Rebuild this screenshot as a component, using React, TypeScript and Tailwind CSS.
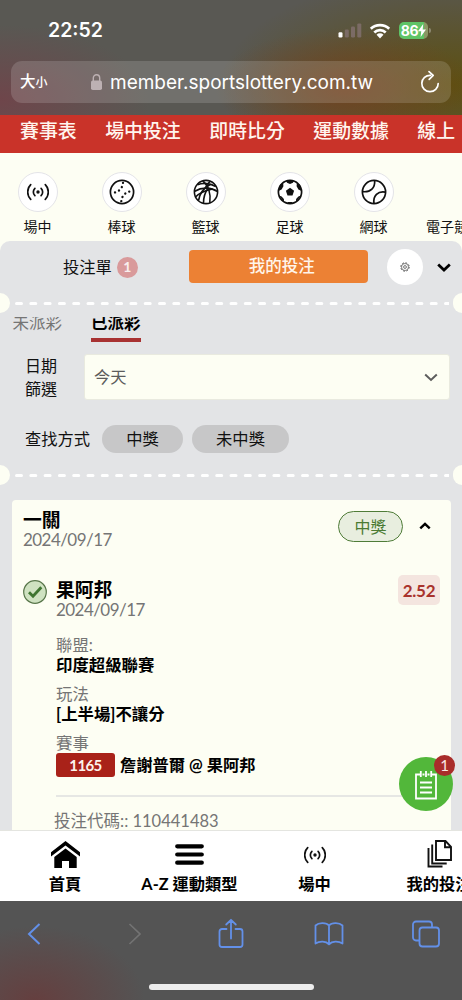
import type { ReactNode } from 'react'
import clsx from 'clsx'

const NAV_LINKS = ['賽事表', '場中投注', '即時比分', '運動數據', '線上']

const SPORTS: { label: string; icon: ReactNode }[] = [
  { label: '場中', icon: <LiveIcon className="w-[22px] h-[22px]" /> },
  { label: '棒球', icon: <BaseballIcon /> },
  { label: '籃球', icon: <BasketballIcon /> },
  { label: '足球', icon: <FootballIcon /> },
  { label: '網球', icon: <TennisIcon /> },
]

const BET_INFO = [
  { label: '聯盟:', value: '印度超級聯賽' },
  { label: '玩法', value: '[上半場]不讓分' },
]

function LiveIcon({ className }: { className?: string }) {
  return (
    <svg viewBox="0 0 22 22" className={className} fill="none" stroke="#111" strokeWidth="1.7" strokeLinecap="round">
      <circle cx="11" cy="11" r="1.7" fill="#111" stroke="none" />
      <path d="M7.9 7.3a5.2 5.2 0 0 0 0 7.4M14.1 7.3a5.2 5.2 0 0 1 0 7.4" />
      <path d="M3.7 3.6a10.6 10.6 0 0 0 0 14.8M18.3 3.6a10.6 10.6 0 0 1 0 14.8" />
    </svg>
  )
}

function BaseballIcon() {
  return (
    <svg viewBox="0 0 26 26" className="w-[26px] h-[26px]" fill="none" stroke="#111" strokeWidth="1.7">
      <circle cx="13" cy="13" r="11.6" />
      <path d="M14 3.5a10.5 10.5 0 0 1-9.5 10.2M12.3 22.5A10.5 10.5 0 0 1 21.8 12.3" strokeWidth="2.3" strokeLinecap="round" strokeDasharray="0.1 4.3" strokeDashoffset="-0.3" />
    </svg>
  )
}

function BasketballIcon() {
  return (
    <svg viewBox="0 0 26 26" className="w-[26px] h-[26px]" fill="none" stroke="#111" strokeWidth="1.6">
      <circle cx="13" cy="13" r="11.6" />
      <path d="M4.5 5.8C10 3.6 17.5 4.4 22.8 7.5M1.8 12.2C9 7.8 18 8.2 24.6 12.6M2.5 18C7 13.5 13 11.2 19.8 10" />
      <path d="M9.8 2C15.5 6.5 18 15 16.8 23.8M17.5 2.2C14.5 4.5 13.2 6 12.6 8.5M5.5 21.5c1-6 5-12.5 12-16.3M10.5 24c0-5 1.5-10.5 4.3-14.5" />
    </svg>
  )
}

function FootballIcon() {
  return (
    <svg viewBox="0 0 26 26" className="w-[26px] h-[26px]" fill="#111">
      <circle cx="13" cy="13" r="11.6" fill="none" stroke="#111" strokeWidth="1.7" />
      <path d="M13 8.8l4.1 3-1.6 4.8h-5l-1.6-4.8z" />
      <path d="M9 1.5h8l-1 2.2-3 1.2-3-1.2zM3 5.6L6.2 4.6 6.4 7.3 4.6 10.4 1.4 12zM23 5.6L19.8 4.6 19.6 7.3l1.8 3.1 3.2 1.6zM1.8 16.5l2.8.9 2.3 2.6.1 3zM24.2 16.5l-2.8.9-2.3 2.6-.1 3zM10 24.5l.9-1.6h4.2l.9 1.6z" />
    </svg>
  )
}

function TennisIcon() {
  return (
    <svg viewBox="0 0 26 26" className="w-[26px] h-[26px]" fill="none" stroke="#111" strokeWidth="1.7">
      <circle cx="13" cy="13" r="11.6" />
      <path d="M13.6 1.4C14.4 8.6 9.6 13.6 1.6 12.6M24.4 13.2C17 11.8 11.8 16.8 13 24.5" />
    </svg>
  )
}

function Chevron({ up, className }: { up?: boolean; className?: string }) {
  return (
    <svg viewBox="0 0 14 9" className={className} fill="none" stroke="currentColor">
      <path d={up ? 'M1.5 7.3L7 2l5.5 5.3' : 'M1.2 1.6L7 7l5.8-5.4'} />
    </svg>
  )
}

// ticket-style perforation with a notch on both sides
function Perforation() {
  return (
    <div className="flex h-[20px] items-center justify-between overflow-hidden">
      <span className="h-[20px] w-[10px] shrink-0 rounded-r-full bg-[#fdfef3]" />
      <svg className="h-[3px] w-[434px] shrink-0" viewBox="0 0 434 3">
        <line x1="1.5" y1="1.5" x2="434" y2="1.5" stroke="#fff" strokeWidth="3" strokeLinecap="round" strokeDasharray="5 9.3" />
      </svg>
      <span className="h-[20px] w-[9px] shrink-0 rounded-l-full bg-[#fdfef3]" />
    </div>
  )
}

function BrowserHeader() {
  return (
    <header className="h-[115px] bg-[radial-gradient(ellipse_130px_60px_at_345px_88px,#74401fdd,transparent),radial-gradient(ellipse_230px_110px_at_450px_85px,#5d5010,transparent),radial-gradient(ellipse_150px_75px_at_0px_100px,#70444aee,transparent)] bg-[#595853] font-['Inter','Noto_Sans_CJK_TC',sans-serif] text-white">
      <div className="flex h-[61px] items-center justify-between pl-[48px] pr-[31px]">
        <span className="text-[19.5px] font-semibold leading-none">22:52</span>
        <div className="flex items-center">
          <svg className="h-[15px] w-[24px]" viewBox="0 0 24 15">
            <rect x="0.5" y="9.3" width="4" height="5.2" rx="1.2" fill="#fff" />
            <rect x="6.8" y="6.6" width="4" height="7.9" rx="1.2" fill="#7b6b65" />
            <rect x="13" y="3.5" width="4" height="11" rx="1.2" fill="#7b6b65" />
            <rect x="19.3" y="0.4" width="4" height="14.1" rx="1.2" fill="#7b6b65" />
          </svg>
          <svg className="ml-[7px] h-[16px] w-[22px]" viewBox="0 0 22 16" fill="none" stroke="#fff" strokeWidth="2.7">
            <path d="M1.8 5.8a13.3 13.3 0 0 1 18.4 0M5.3 9.5a8.2 8.2 0 0 1 11.4 0" />
            <path d="M11 15.4L7.5 11.8a5 5 0 0 1 7 0z" fill="#fff" stroke="none" />
          </svg>
          <div className="ml-2 flex h-[17px] w-[29px] items-center justify-center rounded-[5px] bg-[linear-gradient(90deg,#5fc466_86%,#8b9765_86%)] text-[14px] font-bold leading-none tracking-[-0.3px]">
            86
            <svg className="h-[13px] w-[8px]" viewBox="0 0 8 13"><path d="M5.2 0L0 7.2h3.2L2.6 13 8 5.6H4.7z" fill="#fff" /></svg>
          </div>
          <span className="ml-px h-[5px] w-[2px] rounded-r-full bg-white/30" />
        </div>
      </div>
      <div className="mx-[11px] flex h-[42px] items-center rounded-[11px] bg-white/15 pl-[9px] pr-[11px]">
        <span className="w-[71px] whitespace-nowrap text-[15.5px] font-medium leading-none">大<span className="text-[12px]">小</span></span>
        <svg className="h-[16px] w-[11px]" viewBox="0 0 11 16">
          <rect y="6.5" width="11" height="9.5" rx="1.8" fill="#bdb1b3" />
          <path d="M2.3 7V4a3.2 3.2 0 0 1 6.4 0v3" fill="none" stroke="#bdb1b3" strokeWidth="1.4" />
        </svg>
        <span className="ml-[8px] flex-1 text-[19px] leading-none">member.sportslottery.com.tw</span>
        <svg className="h-[24px] w-[20px]" viewBox="0 0 20 24" fill="none" stroke="#fff" strokeWidth="1.7" strokeLinecap="round" strokeLinejoin="round">
          <path d="M10.5 5.3a8.2 8.2 0 1 0 7.7 8.2M9 1.6l4.2 3.8L9.2 9.3" />
        </svg>
      </div>
    </header>
  )
}

function BetCard() {
  return (
    <section className="ml-[12px] mr-[11px] mt-[15px] h-[330px] overflow-hidden rounded-t-[4px] bg-[#fdfef3] px-[11px] pt-[9px]">
      <div className="flex h-[41px] justify-between">
        <div>
          <h2 className="h-[21px] text-[18.8px] font-bold leading-[21px] text-black">一關</h2>
          <p className="text-[17px] leading-[19px] tracking-[-0.55px] text-[#757575]">2024/09/17</p>
        </div>
        <div className="flex items-start pt-[2px]">
          <span className="flex h-[31px] w-[65px] items-center justify-center rounded-full border border-[#4f7c38] bg-[#e8eedf] text-[16px] leading-none text-[#4a7a32]">中獎</span>
          <Chevron up className="ml-[16px] mr-[9px] mt-[11px] h-[8px] w-[12px] text-black stroke-[2.8]" />
        </div>
      </div>

      <div className="mt-[29px] flex">
        <svg className="mt-[1px] h-[24px] w-[24px] shrink-0" viewBox="0 0 24 24">
          <circle cx="12" cy="12" r="11.3" fill="#cfe2c1" stroke="#58764a" strokeWidth="1.2" />
          <path d="M6 12.3l4 4 8.3-9" fill="none" stroke="#3f7530" strokeWidth="2.8" />
        </svg>
        <div className="ml-[9px] flex-1">
          <div className="flex h-[41px] justify-between">
            <div>
              <h3 className="h-[21px] text-[18.8px] font-bold leading-[21px] text-black">果阿邦</h3>
              <p className="text-[17px] leading-[19px] tracking-[-0.55px] text-[#757575]">2024/09/17</p>
            </div>
            <span className="-mt-[4px] flex h-[30px] w-[42px] items-center justify-center rounded-[5px] bg-[#f4e5df] text-[17px] font-bold leading-none tracking-[-0.3px] text-[#a9332c]">2.52</span>
          </div>
          <div className="mt-[15px] text-[16.4px] leading-[20px]">
            {BET_INFO.map((info) => (
              <div key={info.label} className="mb-[9px]">
                <p className="h-[20px] text-[#757575]">{info.label}</p>
                <p className="h-[20px] font-bold text-black">{info.value}</p>
              </div>
            ))}
            <p className="h-[20px] text-[#757575]">賽事</p>
            <div className="flex h-[24px] items-center">
              <span className="flex h-[24px] w-[59px] items-center justify-center rounded-[3px] bg-[#a92219] text-[15px] font-bold leading-none tracking-[-0.6px] text-[#fdf4ec]">1165</span>
              <span className="ml-[5px] whitespace-nowrap text-[16.3px] font-bold text-black">詹謝普爾 @ 果阿邦</span>
            </div>
          </div>
          <div className="mt-[18px] border-t-2 border-[#e6e7e4] pt-[14px]">
            <p className="-ml-[2px] text-[16.5px] leading-[20px] text-[#757575]">投注代碼:: 110441483</p>
          </div>
        </div>
      </div>
    </section>
  )
}

function BottomNav() {
  return (
    <nav className="flex h-[71px] overflow-hidden border-t border-[#e4e5e0] bg-white text-[16.3px] font-bold leading-[20px] text-black">
      <div className="flex w-[130px] shrink-0 flex-col items-center">
        <svg className="mt-[10px] h-[27px] w-[29px]" viewBox="0 0 29 27">
          <path d="M0 11.2L14.5 0 29 11.2v4.3L14.5 4.4 0 15.5z" />
          <path d="M3.3 16L14.5 7.4 25.7 16v11H18v-7h-7v7H3.3z" />
        </svg>
        <span className="mt-[6px]">首頁</span>
      </div>
      <div className="flex w-[119px] shrink-0 flex-col items-center whitespace-nowrap">
        <svg className="mt-[10px] h-[27px] w-[29px]" viewBox="0 0 29 27" stroke="#000" strokeWidth="4.2" strokeLinecap="round">
          <path d="M2.2 5.3h24.6M2.2 13.5h24.6M2.2 21.7h24.6" />
        </svg>
        <span className="mt-[6px]">A-Z 運動類型</span>
      </div>
      <div className="flex w-[131px] shrink-0 flex-col items-center">
        <LiveIcon className="mb-[2px] mt-[13px] h-[22px] w-[22px]" />
        <span className="mt-[6px]">場中</span>
      </div>
      <div className="ml-[19px] flex w-[80px] shrink-0 flex-col items-center whitespace-nowrap">
        <svg className="ml-[2px] mt-[8px] h-[29px] w-[26px]" viewBox="0 0 26 29" fill="none" stroke="#111" strokeWidth="1.9">
          <path d="M9 2h9.5l5.5 5.8V21H9zM18 2v6.3h6" />
          <path d="M5.2 5.5v19h14.5M1.5 9v18.5h14" />
        </svg>
        <span className="mt-[6px]">我的投注</span>
      </div>
    </nav>
  )
}

function BrowserToolbar() {
  return (
    <footer className="flex h-[99px] flex-col bg-[#545454] bg-[radial-gradient(ellipse_110px_75px_at_35px_100px,#653f3f,transparent)]">
      <div className="flex h-[65px] items-center pl-[27px] text-[#6390e8]">
        <svg className="h-[24px] w-[14px]" viewBox="0 0 14 24" fill="none" stroke="currentColor" strokeWidth="2"><path d="M12.5 2L2 12l10.5 10" /></svg>
        <svg className="ml-[87px] h-[24px] w-[14px] text-[#737373]" viewBox="0 0 14 24" fill="none" stroke="currentColor" strokeWidth="1.7"><path d="M1.5 2L12 12 1.5 22" /></svg>
        <svg className="ml-[76px] h-[32px] w-[26px]" viewBox="0 0 26 32" fill="none" stroke="currentColor" strokeWidth="1.8" strokeLinecap="round" strokeLinejoin="round">
          <path d="M8.5 11H4a2.5 2.5 0 0 0-2.5 2.5v13A2.5 2.5 0 0 0 4 29h18a2.5 2.5 0 0 0 2.5-2.5v-13A2.5 2.5 0 0 0 22 11h-4.5M13 20.5V2M8.2 6.5L13 1.8l4.8 4.7" />
        </svg>
        <svg className="ml-[70px] h-[26px] w-[30px]" viewBox="0 0 30 26" fill="none" stroke="currentColor" strokeWidth="1.8" strokeLinejoin="round">
          <path d="M15 4.5C12.5 1.5 5 1 1.5 4.5v18c4-2.5 10.5-2.5 13.5.8zM15 4.5c2.5-3 10-3.5 13.5 0v18c-4-2.5-10.5-2.5-13.5.8z" />
        </svg>
        <svg className="ml-[68px] h-[28px] w-[28px]" viewBox="0 0 28 28" fill="none" stroke="currentColor" strokeWidth="1.8">
          <rect x="7.5" y="7.5" width="19.5" height="19" rx="3" />
          <path d="M7.5 20.5H4a3 3 0 0 1-3-3V4.5a3 3 0 0 1 3-3h13a3 3 0 0 1 3 3v3" />
        </svg>
      </div>
      <div className="mt-[18px] h-[6px] w-[165px] self-center rounded-full bg-[#ededed]" />
    </footer>
  )
}

export default function App() {
  return (
    <div className="relative h-[1000px] w-[462px] overflow-hidden bg-[#fdfef3] font-['Lato','Noto_Sans_CJK_TC',sans-serif] text-[#111]">
      <BrowserHeader />

      <nav className="flex h-[38px] gap-[28.5px] overflow-hidden whitespace-nowrap bg-[#c93329] pl-[20px] text-[18.9px] font-medium leading-[31px] text-[#fff5ee]">
        {NAV_LINKS.map((link) => <span key={link}>{link}</span>)}
      </nav>

      <div className="flex h-[88px] overflow-hidden">
        <div className="-ml-[4px] flex pt-[19px]">
          {SPORTS.map((s) => (
            <div key={s.label} className="flex w-[84px] shrink-0 flex-col items-center">
              <div className="flex h-[40px] w-[40px] items-center justify-center rounded-full border border-[#e4e4e8] bg-white">{s.icon}</div>
              <span className="-ml-px mt-[5px] text-[14px] leading-[20px]">{s.label}</span>
            </div>
          ))}
          <span className="ml-[10px] mt-[45px] shrink-0 whitespace-nowrap text-[14px] leading-[20px]">電子競技</span>
        </div>
      </div>

      <main className="h-[589px] overflow-hidden rounded-t-[10px] bg-[#e3e4e6]">
        <div className="flex h-[52px] items-center pl-[63px]">
          <span className="text-[16.3px] leading-none">投注單</span>
          <span className="ml-[5px] flex h-[21px] w-[21px] items-center justify-center rounded-full bg-[#d99a9b] text-[14px] font-bold leading-none text-[#f9eeee]">1</span>
          <button className="mb-px ml-[51px] h-[33px] w-[179px] rounded-[4px] bg-[#ec8134] pl-[7px] text-[16.5px] font-medium leading-none text-[#fff5ea]">我的投注</button>
          <span className="ml-[19px] flex h-[36px] w-[36px] items-center justify-center rounded-full bg-white">
            <svg className="h-[10px] w-[10px]" viewBox="0 0 10 10" fill="none" stroke="#555">
              <circle cx="5" cy="5" r="4.2" strokeWidth="1" strokeDasharray="1.7 1.6" />
              <circle cx="5" cy="5" r="3.5" strokeWidth="0.7" />
              <circle cx="5" cy="5" r="1.4" strokeWidth="0.8" />
            </svg>
          </span>
          <Chevron className="ml-[14px] h-[9px] w-[14px] text-black stroke-[2.8]" />
        </div>

        <Perforation />

        {/* tabs are scrolled partly under the perforation */}
        <div className="mt-[4px] flex h-[25px] items-start gap-[29px] overflow-hidden pl-[12.5px] text-[16.5px] leading-[20px]">
          <span className="-mt-[4px] text-[#757575]">未派彩</span>
          <div className="-mt-[4px] h-[29px] border-b-[4px] border-[#a83232] font-bold text-black">已派彩</div>
        </div>

        <div className="mt-[12px] flex h-[46px] items-center pl-[25px]">
          <span className="w-[59px] text-[16px] leading-[23.5px]">日期<br />篩選</span>
          <div className="flex h-[46px] w-[366px] items-center justify-between rounded-[3px] border border-[#e9eadf] bg-[#fdfef3] pl-[9px] pr-[11px] text-[#5c5c5c]">
            <span className="text-[16.3px] leading-none">今天</span>
            <Chevron className="h-[9px] w-[14px] stroke-[2]" />
          </div>
        </div>

        <div className="mt-[25px] flex h-[28px] items-center pl-[25px] text-[16.3px] leading-none">
          <span className="w-[77px]">查找方式</span>
          {['中獎', '未中獎'].map((name, i) => (
            <button key={name} className={clsx('h-[28px] rounded-full bg-[#c7c7c8]', i === 0 ? 'w-[81px]' : 'ml-[9px] w-[97px]')}>{name}</button>
          ))}
        </div>

        <div className="mt-[12px]"><Perforation /></div>
        <BetCard />
      </main>

      <BottomNav />
      <BrowserToolbar />

      {/* floating bet slip button */}
      <button className="absolute left-[399px] top-[757px] flex h-[54px] w-[54px] items-center justify-center rounded-full bg-[#52b73a]">
        <svg className="mt-[2px] h-[30px] w-[22px]" viewBox="0 0 22 30" fill="none" stroke="#fff" strokeWidth="1.8">
          <path d="M5.8 4.5H1V28.5h20V4.5h-4.8M5.8 1v6M11 1v6M16.2 1v6M7.5 4.5h2M12.5 4.5h2M5 12.5h12M5 17.5h12M5 22.5h12" />
        </svg>
        <span className="absolute -top-[2px] left-[35px] flex h-[21px] w-[21px] items-center justify-center rounded-full bg-[#a92d2a] text-[15px] leading-none text-[#fbe9e6]">1</span>
      </button>
    </div>
  )
}
